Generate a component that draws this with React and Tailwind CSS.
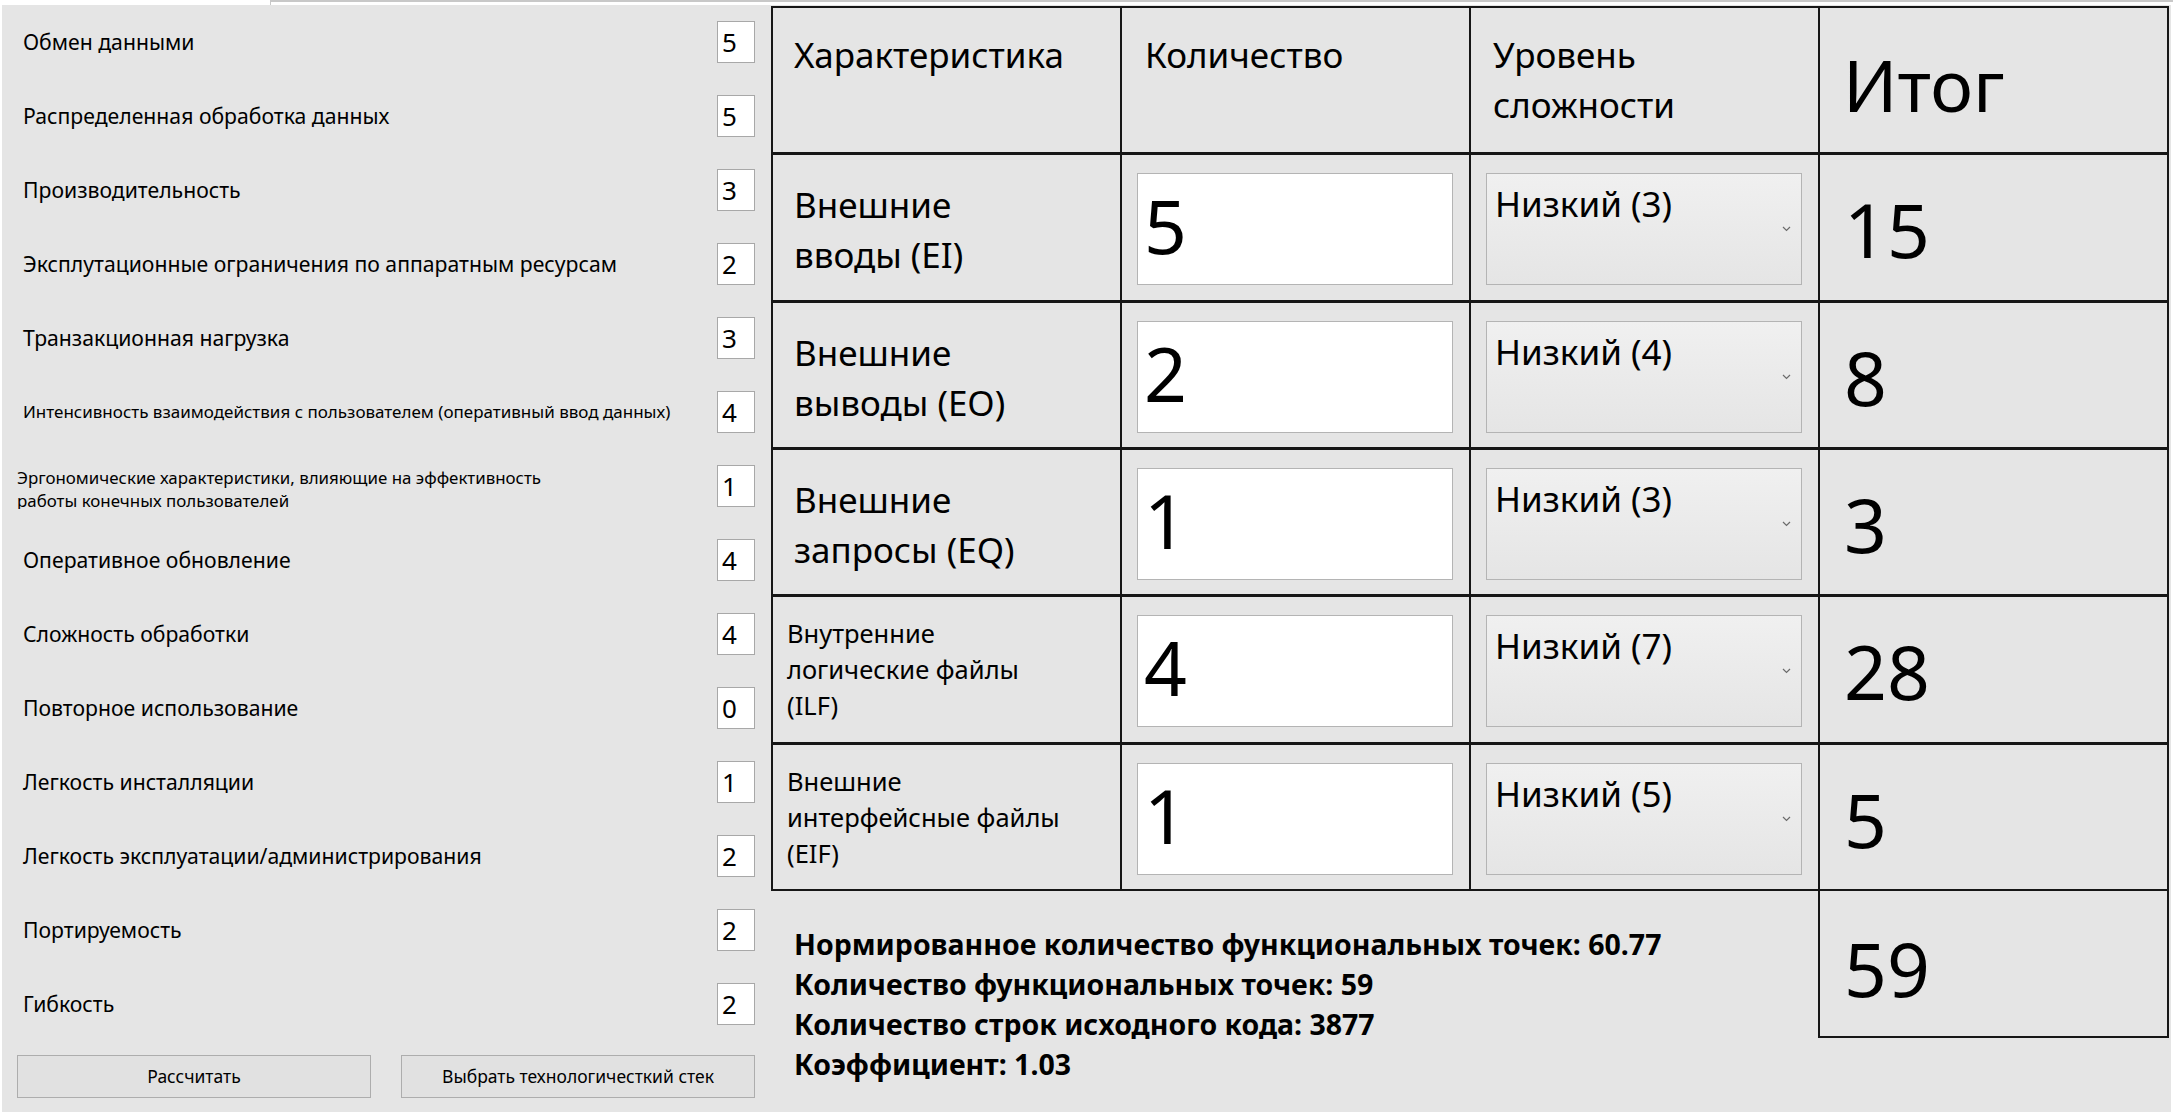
import { useState } from "react";

const factors = [
  { label: "Обмен данными", value: 5 },
  { label: "Распределенная обработка данных", value: 5 },
  { label: "Производительность", value: 3 },
  { label: "Эксплутационные ограничения по аппаратным ресурсам", value: 2 },
  { label: "Транзакционная нагрузка", value: 3 },
  { label: "Интенсивность взаимодействия с пользователем (оперативный ввод данных)", value: 4, small: true },
  { label: "Эргономические характеристики, влияющие на эффективность\nработы конечных пользователей", value: 1, twoLines: true },
  { label: "Оперативное обновление", value: 4 },
  { label: "Сложность обработки", value: 4 },
  { label: "Повторное использование", value: 0 },
  { label: "Легкость инсталляции", value: 1 },
  { label: "Легкость эксплуатации/администрирования", value: 2 },
  { label: "Портируемость", value: 2 },
  { label: "Гибкость", value: 2 },
];

const rows = [
  { name: ["Внешние", "вводы (EI)"], qty: 5, level: "Низкий (3)", total: 15 },
  { name: ["Внешние", "выводы (EO)"], qty: 2, level: "Низкий (4)", total: 8 },
  { name: ["Внешние", "запросы (EQ)"], qty: 1, level: "Низкий (3)", total: 3 },
  { name: ["Внутренние", "логические файлы", "(ILF)"], qty: 4, level: "Низкий (7)", total: 28, small: true },
  { name: ["Внешние", "интерфейсные файлы", "(EIF)"], qty: 1, level: "Низкий (5)", total: 5, small: true },
];

function Chevron() {
  return (
    <svg width="9" height="6" viewBox="0 0 9 6" className="absolute right-[10px] top-[52px]">
      <path d="M1 1 L4.5 4.5 L8 1" fill="none" stroke="#6b6b6b" strokeWidth="1.2" />
    </svg>
  );
}

function FactorRow({ item }) {
  return (
    <div className="h-[74px] flex items-center">
      {item.twoLines ? (
        <div className="w-[714px] pl-[15px] pt-[3px] h-[46px] overflow-hidden text-[16.9px] leading-[23px] whitespace-pre-line">
          {item.label}
        </div>
      ) : (
        <div className={`w-[714px] pl-[21px] ${item.small ? "text-[17px]" : "text-[21.2px]"}`}>
          {item.label}
        </div>
      )}
      <div className="ml-[1px] w-[38px] h-[42px] bg-white border border-[#a8a8a8] text-[26px] leading-[40px] pl-[4px]">
        {item.value}
      </div>
    </div>
  );
}

export default function App() {
  const [data] = useState(rows);

  return (
    <div
      className="w-[2173px] h-[1117px] bg-white text-black overflow-hidden"
      style={{ fontFamily: '"Noto Sans", "Open Sans", sans-serif' }}
    >
      {/* tab strip */}
      <div className="h-[5px] flex">
        <div className="w-[270px]" />
        <div className="flex-1 border-t-2 border-l border-[#c8c8c8]" />
      </div>

      <div className="ml-[2px] mr-[2px] h-[1107px] bg-[#e5e5e5] flex">
        {/* left column */}
        <div className="w-[769px] flex flex-col">
          {factors.map((f, i) => (
            <FactorRow key={i} item={f} />
          ))}
          <div className="flex mt-[14px] pl-[15px] gap-[30px]">
            <button className="w-[354px] h-[43px] bg-[#e1e1e1] border border-[#adadad] text-[17.5px]">
              Рассчитать
            </button>
            <button className="w-[354px] h-[43px] bg-[#e1e1e1] border border-[#adadad] text-[17.5px]">
              Выбрать технологичесткий стек
            </button>
          </div>
        </div>

        {/* right side */}
        <div className="w-[1398px] pt-[1px] flex flex-col">
          <div className="h-[885px] grid grid-cols-4 grid-rows-6 gap-x-[2px] gap-y-[3px] bg-[#161616] border-2 border-[#161616]">
            {/* header */}
            <div className="bg-[#e5e5e5] pl-[21px] pt-[22px] text-[35px] leading-[50px]">Характеристика</div>
            <div className="bg-[#e5e5e5] pl-[23px] pt-[22px] text-[35px] leading-[50px]">Количество</div>
            <div className="bg-[#e5e5e5] pl-[22px] pt-[22px] text-[35px] leading-[50px]">
              Уровень
              <br />
              сложности
            </div>
            <div className="bg-[#e5e5e5] pl-[23px] pt-[26px] text-[72px] leading-[100px]">Итог</div>

            {data.map((r, i) => (
              <div key={i} className="contents">
                <div className="bg-[#e5e5e5] flex items-center">
                  {r.small ? (
                    <div className="pl-[14px] text-[25.5px] leading-[36px]">
                      {r.name.map((n, j) => (
                        <div key={j}>{n}</div>
                      ))}
                    </div>
                  ) : (
                    <div className="pl-[21px] text-[35px] leading-[50px] mt-[6px]">
                      {r.name.map((n, j) => (
                        <div key={j}>{n}</div>
                      ))}
                    </div>
                  )}
                </div>
                <div className="bg-[#e5e5e5] pt-[18px] pl-[15px]">
                  <div className="w-[316px] h-[112px] bg-white border border-[#b4b4b4] pl-[6px] text-[75px] leading-[102px]">
                    {r.qty}
                  </div>
                </div>
                <div className="bg-[#e5e5e5] pt-[18px] pl-[15px]">
                  <div className="relative w-[316px] h-[112px] bg-gradient-to-b from-[#f0f0f0] to-[#e5e5e5] border border-[#b4b4b4] pl-[8px] pt-[6px] text-[35px] leading-[48px]">
                    {r.level}
                    <Chevron />
                  </div>
                </div>
                <div className="bg-[#e5e5e5] pl-[24px] pt-[16px] text-[75px] leading-[116px]">{r.total}</div>
              </div>
            ))}
          </div>

          <div className="flex">
            <div className="flex-1 pl-[23px] pt-[33px] text-[28.5px] font-bold leading-[40px]">
              <div>Нормированное количество функциональных точек: 60.77</div>
              <div>Количество функциональных точек: 59</div>
              <div>Количество строк исходного кода: 3877</div>
              <div>Коэффициент: 1.03</div>
            </div>
            <div className="w-[351px] h-[147px] border-2 border-t-0 border-[#161616] pl-[24px] pt-[22px] text-[75px] leading-[110px]">
              59
            </div>
          </div>
        </div>
      </div>
    </div>
  );
}
